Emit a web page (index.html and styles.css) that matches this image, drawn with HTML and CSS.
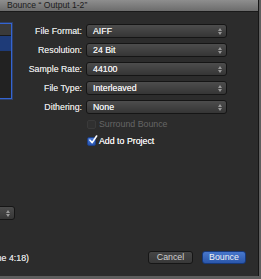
FILE: index.html
```html
<!DOCTYPE html>
<html>
<head>
<meta charset="utf-8">
<link rel="stylesheet" href="styles.css">
</head>
<body>
<div class="window">
  <div class="titlebar">Bounce “ Output 1-2”</div>
  <div class="content">
    <div class="left">
      <div class="list">
        <div class="list-head"></div>
        <div class="list-sel"></div>
      </div>
      <div class="mini-popup"><span class="arrows"><i class="up"></i><i class="down"></i></span></div>
    </div>
    <div class="form">
      <div class="label">File Format:</div>
      <div class="popup">AIFF<span class="arrows"><i class="up"></i><i class="down"></i></span></div>
      <div class="label">Resolution:</div>
      <div class="popup">24 Bit<span class="arrows"><i class="up"></i><i class="down"></i></span></div>
      <div class="label">Sample Rate:</div>
      <div class="popup">44100<span class="arrows"><i class="up"></i><i class="down"></i></span></div>
      <div class="label">File Type:</div>
      <div class="popup">Interleaved<span class="arrows"><i class="up"></i><i class="down"></i></span></div>
      <div class="label">Dithering:</div>
      <div class="popup">None<span class="arrows"><i class="up"></i><i class="down"></i></span></div>
      <div></div>
      <div class="check disabled"><span class="box"></span>Surround Bounce</div>
      <div></div>
      <div class="check"><span class="box on"><svg viewBox="0 0 10 10" width="10" height="10"><path d="M2 5.2 L4.2 7.6 L8.6 1" fill="none" stroke="#fff" stroke-width="1.6" stroke-linecap="round" stroke-linejoin="round"/></svg></span>Add to Project</div>
    </div>
  </div>
  <div class="footer">
    <div class="info"><span>Length: 4 bars (Time 4:18)</span></div>
    <div class="buttons">
      <div class="btn cancel">Cancel</div>
      <div class="btn default">Bounce</div>
    </div>
  </div>
</div>
</body>
</html>
```
FILE: styles.css
```css
html, body {
  margin: 0;
  padding: 0;
}
body {
  width: 261px;
  height: 279px;
  background: #5e5e5e;
  font-family: "Liberation Sans", Arial, sans-serif;
  font-size: 8.8px;
  overflow: hidden;
}
.window {
  width: 258px;
  height: 276px;
  background: #2c2c2c;
  border-right: 1px solid #161616;
  display: flex;
  flex-direction: column;
}
.titlebar {
  height: 11px;
  line-height: 10px;
  border-bottom: 1px solid #1a1a1a;
  background: linear-gradient(#8e8e8e, #6c6c6c);
  color: #1c1c1c;
  padding-left: 7px;
  font-size: 8.6px;
  white-space: nowrap;
}
.content {
  display: flex;
  flex: 1;
}
.left {
  width: 15px;
  overflow: hidden;
  display: flex;
  flex-direction: column;
  align-items: flex-end;
}
.list {
  width: 11px;
  height: 74px;
  margin-top: 11px;
  margin-right: 3px;
  background: #222;
  border: 1px solid #3464d2;
  border-left: none;
  box-shadow: 0 0 0 1px rgba(52, 100, 210, 0.35);
  display: flex;
  flex-direction: column;
}
.list-head {
  height: 11px;
  background: #3a3a3a;
  border-bottom: 1px solid #1a1a1a;
}
.list-sel {
  height: 15px;
  background: #1e3b78;
}
.mini-popup {
  width: 40px;
  height: 12px;
  margin-top: 107px;
  border: 1px solid #161616;
  border-radius: 3px;
  background: linear-gradient(#4c4c4c, #363636);
  position: relative;
  flex: none;
}
.form {
  display: grid;
  grid-template-columns: 67px 141px;
  grid-template-rows: 14px 14px 14px 14px 14px 10px 14px;
  column-gap: 4px;
  row-gap: 5px;
  padding-top: 12px;
  align-items: center;
}
.label {
  text-align: right;
  color: #dcdcdc;
  white-space: nowrap;
  text-shadow: 0 0 0.4px #dcdcdc;
}
.popup {
  height: 12px;
  line-height: 12px;
  border: 1px solid #151515;
  border-radius: 3px;
  background: linear-gradient(#4d4d4d, #353535);
  color: #ececec;
  padding-left: 6px;
  position: relative;
  white-space: nowrap;
  text-shadow: 0 0 0.4px #ececec;
}
.arrows {
  position: absolute;
  right: 4px;
  top: 3px;
  display: flex;
  flex-direction: column;
  gap: 1px;
}
.arrows i {
  display: block;
  width: 0;
  height: 0;
  border-left: 2px solid transparent;
  border-right: 2px solid transparent;
}
.arrows .up {
  border-bottom: 3px solid #9a9a9a;
}
.arrows .down {
  border-top: 3px solid #9a9a9a;
}
.check {
  display: flex;
  align-items: center;
  gap: 3px;
  padding-left: 1px;
  color: #f0f0f0;
  white-space: nowrap;
  text-shadow: 0 0 0.4px #f0f0f0;
}
.check.disabled {
  color: #666;
  text-shadow: none;
}
.box {
  width: 7px;
  height: 7px;
  border: 1px solid #3a3a3a;
  border-radius: 2px;
  background: #303030;
  position: relative;
  flex: none;
}
.box.on {
  background: linear-gradient(#4a7ad6, #2553b0);
  border-color: #1d3f86;
}
.box svg {
  position: absolute;
  left: 0;
  top: -3px;
}
.footer {
  display: flex;
  align-items: center;
  justify-content: space-between;
  height: 14px;
  padding: 0 12px 12px 0;
}
.info {
  width: 29px;
  overflow: hidden;
  display: flex;
  justify-content: flex-end;
  color: #dcdcdc;
  white-space: nowrap;
  margin-top: 2px;
  text-shadow: 0 0 0.4px #dcdcdc;
}
.info span {
  flex: none;
}
.buttons {
  display: flex;
  gap: 9px;
}
.btn {
  height: 11px;
  line-height: 11px;
  border-radius: 3px;
  text-align: center;
  font-size: 8.8px;
}
.cancel {
  width: 43px;
  border: 1px solid #161616;
  background: linear-gradient(#464646, #383838);
  color: #cfcfcf;
}
.default {
  width: 42px;
  border: 1px solid #16387a;
  background: linear-gradient(#4878cc, #2b57ab);
  color: #f2f2f2;
}
```
